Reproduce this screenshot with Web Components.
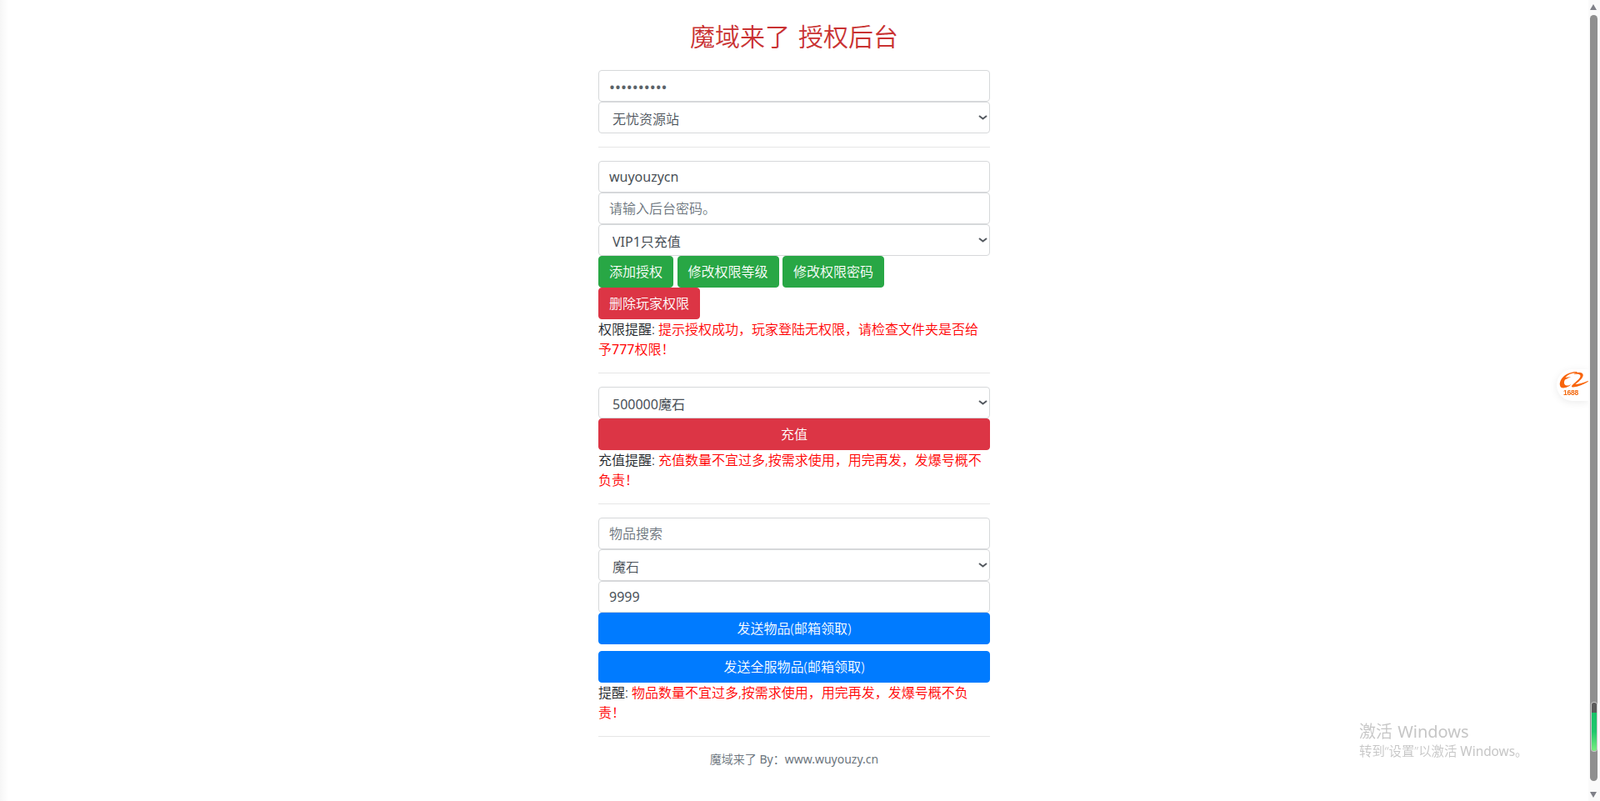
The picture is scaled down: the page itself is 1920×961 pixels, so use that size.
<!DOCTYPE html>
<html lang="zh-CN">
<head>
<meta charset="utf-8">
<title>魔域来了 授权后台</title>
<style>
html,body{margin:0;padding:0;height:100%;overflow:hidden;background:#fff}
body{font-family:"Noto Sans","Noto Sans CJK SC",sans-serif;font-weight:350;color:#212529;font-size:16px;line-height:24px}
</style>
</head>
<body>
<admin-page>
  <page-title>魔域来了 授权后台</page-title>
  <text-field type="password" value="wuyouzycn1"></text-field>
  <select-field><option>无忧资源站</option></select-field>
  <divider-line></divider-line>
  <text-field value="wuyouzycn"></text-field>
  <text-field placeholder="请输入后台密码。"></text-field>
  <select-field latin><option>VIP1只充值</option></select-field>
  <button-row>
    <action-button tone="green">添加授权</action-button>
    <action-button tone="green">修改权限等级</action-button>
    <action-button tone="green">修改权限密码</action-button>
    <action-button tone="red">删除玩家权限</action-button>
  </button-row>
  <notice-text label="权限提醒:">提示授权成功，玩家登陆无权限，请检查文件夹是否给<br>予<b>777</b>权限！</notice-text>
  <divider-line></divider-line>
  <select-field latin><option>500000魔石</option></select-field>
  <action-button tone="red" block>充值</action-button>
  <notice-text label="充值提醒:">充值数量不宜过多,按需求使用，用完再发，发爆号概不负责！</notice-text>
  <divider-line></divider-line>
  <text-field placeholder="物品搜索"></text-field>
  <select-field><option>魔石</option></select-field>
  <text-field value="9999"></text-field>
  <action-button tone="blue" block>发送物品(邮箱领取)</action-button>
  <action-button tone="blue" block spaced>发送全服物品(邮箱领取)</action-button>
  <notice-text label="提醒:">物品数量不宜过多,按需求使用，用完再发，发爆号概不负责！</notice-text>
  <divider-line></divider-line>
  <page-footer><span>魔域来了 </span><b>By：www.wuyouzy.cn</b></page-footer>
</admin-page>
<edge-shade></edge-shade>
<float-badge></float-badge>
<activate-mark></activate-mark>
<scroll-rail></scroll-rail>
<script>
const FONT='"Noto Sans","Noto Sans CJK SC",sans-serif';
function def(name,html,setup){
  customElements.define(name,class extends HTMLElement{
    connectedCallback(){
      if(this.shadowRoot)return;
      const r=this.attachShadow({mode:'open'});
      r.innerHTML=typeof html==='function'?html(this):html;
      if(setup)setup(this,r);
    }
  });
}
def('admin-page',`<style>:host{display:block;width:1906px;box-sizing:border-box}
.col{width:470px;margin:0 auto}
::slotted(page-footer){font-weight:350}</style><div class="col"><slot></slot></div>`);
def('page-title',`<style>:host{display:block;padding-top:26px;margin-bottom:22px;text-align:center;font-size:30px;line-height:36px;word-spacing:2px;color:#c93232;font-weight:350}</style><slot></slot>`);
def('divider-line',`<style>:host{display:block;height:1px;margin:16px 0;background:#e6e6e6}</style>`);
def('text-field',el=>`<style>:host{display:block;height:38px}
input{display:block;width:100%;height:38px;box-sizing:border-box;padding:6px 12px;border:1px solid #d6d8da;border-radius:4px;font:400 16px/24px ${FONT};color:#495057;background:#fff;outline:0;margin:0}
input[type=password]{font-size:18.5px;color:#5a6268}
input::placeholder{color:#6c757d;opacity:1;font-weight:350}</style>
<input type="${el.getAttribute('type')||'text'}" value="${el.getAttribute('value')||''}" placeholder="${el.getAttribute('placeholder')||''}">`);
def('select-field',el=>`<style>:host{display:block;height:38px;position:relative}
select{display:block;width:100%;height:38px;box-sizing:border-box;-webkit-appearance:none;appearance:none;padding:8px 24px 4px 16px;border:1px solid #d6d8da;border-radius:4px;font:${el.hasAttribute('latin')?400:350} 16px/24px ${FONT};color:#495057;background:#fff;outline:0;margin:0}
svg{position:absolute;left:456px;top:16px;display:block;pointer-events:none}</style>
<select></select><svg width="11" height="6" viewBox="0 0 11 6"><path d="M1 1L5.500 4.500L10 1" fill="none" stroke="#555a60" stroke-width="2"/></svg>`,(el,r)=>{const s=r.querySelector('select');[...el.children].forEach(o=>s.appendChild(o));});
def('button-row',`<style>:host{display:flex;flex-wrap:wrap;column-gap:4.5px;padding-right:1px}</style><slot></slot>`);
def('action-button',el=>{
  const c={green:'#28a745',red:'#dc3545',blue:'#007bff'}[el.getAttribute('tone')];
  return `<style>:host{display:${el.hasAttribute('block')?'block':'inline-block'};${el.hasAttribute('spaced')?'margin-top:8px;':''}}
  button{display:block;width:${el.hasAttribute('block')?'100%':'auto'};height:38px;box-sizing:border-box;padding:6px 12px;border:1px solid ${c};border-radius:4px;background:${c};color:#fff;font:350 16px/24px ${FONT};cursor:pointer;white-space:nowrap;margin:0}</style><button type="button"><slot></slot></button>`;
});
def('notice-text',el=>`<style>:host{display:block;line-height:24px;color:#212529}.t{color:#f00}
::slotted(b){font-weight:400}</style>${el.getAttribute('label')} <span class="t"><slot></slot></span>`);
def('page-footer',`<style>:host{display:block;text-align:center;font-size:14px;line-height:21px;color:#6c757d}
::slotted(b){font-weight:400}</style><slot></slot>`);
def('edge-shade',`<style>:host{position:fixed;left:0;top:0;bottom:0;width:10px;background:linear-gradient(90deg,#f6f6f6,#fff);pointer-events:none}</style>`);
def('float-badge',`<style>:host{position:fixed;left:1868px;top:443px;width:38px;height:38px;background:#fff;border-radius:19px 0 0 19px;box-shadow:0 2px 10px rgba(0,0,0,.08);display:block}
svg{position:absolute;left:0;top:0;display:block}
span{position:absolute;left:8px;width:18px;top:24px;text-align:center;font:700 8.500px/9px "Liberation Sans",sans-serif;color:#f36a10;letter-spacing:-.2px}</style>
<svg width="38" height="38" viewBox="0 0 38 38"><path d="M5.500 22C2 19 4 12 9 8C13 5 19 2.500 24 3C25 3.200 25 4.200 24 4.500C18 4 13 6.500 10.500 10L17 9L10 12.500C8 16 9 19 12 19.500C14 19.800 16 19 17.500 18C15 21 9 23.500 5.500 22Z" fill="#f8640a"/><path d="M20 6C24 3 30 3 31.500 6C33 9.500 27 14.500 22.500 18C26 18 31 16.500 37.500 14L38 14.800C32 18.500 26 21 20 21.500C17.500 21.700 17.500 20 19.500 18.200C23 15 28.500 11 28.500 8C28.500 5.500 24 5.500 20 6Z" fill="#f8640a"/></svg><span>1688</span>`);
def('activate-mark',`<style>:host{position:fixed;left:1631px;top:864px;display:block;color:#c6c6c6;font-family:"Noto Sans","Noto Sans CJK SC",sans-serif;font-weight:350;white-space:nowrap}
.a{font-size:20px;line-height:28px;word-spacing:1px}.b{font-size:15.400px;line-height:20px}i{font-style:normal;font-weight:400}</style><div class="a">激活 <i>Windows</i></div><div class="b">转到“设置”以激活 <i>Windows</i>。</div>`);
def('scroll-rail',`<style>:host{position:fixed;left:1906px;top:0;width:14px;height:961px;background:#fafafa;display:block}
.up,.down{position:absolute;left:2px;width:0;height:0;border-left:4.500px solid transparent;border-right:4.500px solid transparent}
.up{top:5px;border-bottom:7px solid #7f8088}.down{top:950px;border-top:7px solid #7f8088}
.thumb{position:absolute;left:2px;top:18px;width:9px;height:919px;background:#8f8f8f;border-radius:5px}
.glow{position:absolute;left:4px;top:843px;width:6px;height:58px;border-radius:3px;background:linear-gradient(180deg,#5a5a5a 0,#5a5a5a 21%,#17c268 21%,#1fc76c 60%,#7aee80 100%);box-shadow:0 0 0 1px rgba(255,255,255,.5)}</style>
<div class="up"></div><div class="thumb"></div><div class="glow"></div><div class="down"></div>`);
</script>
</body>
</html>
